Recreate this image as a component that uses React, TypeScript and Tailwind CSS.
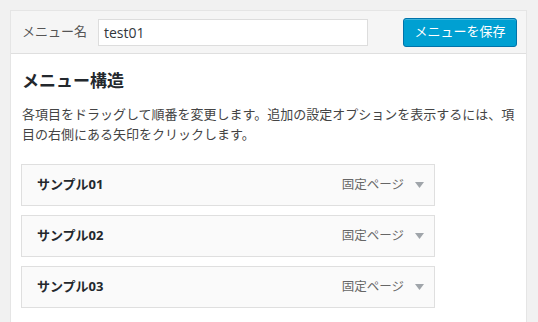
import React from "react";

const font = { fontFamily: '"Open Sans", "Noto Sans CJK JP", sans-serif' };

function Item({ title }: { title: string }) {
  return (
    <div className="flex h-[42px] w-[414px] items-center border border-[#dfdfdf] bg-[#fafafa] pl-[15px] pr-[10px]">
      <span className="text-[13px] font-bold text-[#23282d]">{title}</span>
      <span className="ml-auto text-[12.5px] text-[#666]">固定ページ</span>
      <svg width="9" height="6" viewBox="0 0 9 6" className="ml-[11px] mr-[0px]">
        <path d="M0 0 L9 0 L4.5 6 Z" fill="#a0a5aa" />
      </svg>
    </div>
  );
}

export default function App() {
  return (
    <div className="h-[322px] w-[538px] overflow-hidden bg-[#f1f1f1] pl-[10px] pt-[10px]" style={font}>
      <div className="w-[517px] border border-[#e5e5e5] bg-white">
        <div className="flex h-[43px] items-center border-b border-[#dfdfdf] bg-[#f5f5f5] pl-[11px] pr-[9px]">
          <span className="text-[13px] text-[#555]">メニュー名</span>
          <div className="ml-[11px] flex h-[27px] w-[270px] items-center border border-[#dddddd] bg-white px-[5px] text-[14px] text-[#32373c]">
            test01
          </div>
          <button className="ml-auto flex h-[29px] w-[114px] items-center justify-center rounded-[3px] border border-[#0073aa] bg-[#00a0d2] text-[13px] text-white shadow-[inset_0_1px_0_rgba(120,200,230,0.5)]">
            メニューを保存
          </button>
        </div>
        <div className="pl-[10px] pr-[2px] pt-[16px] pb-[20px]">
          <h3 className="pl-[1px] text-[17px] font-bold leading-[22px] text-[#23282d]">メニュー構造</h3>
          <p className="mt-[12px] whitespace-nowrap pl-[1px] text-[13px] leading-[20px] text-[#444]">
            各項目をドラッグして順番を変更します。追加の設定オプションを表示するには、項
            <br />
            目の右側にある矢印をクリックします。
          </p>
          <div className="mt-[20px] flex flex-col gap-[9px]">
            <Item title="サンプル01" />
            <Item title="サンプル02" />
            <Item title="サンプル03" />
          </div>
        </div>
      </div>
    </div>
  );
}
